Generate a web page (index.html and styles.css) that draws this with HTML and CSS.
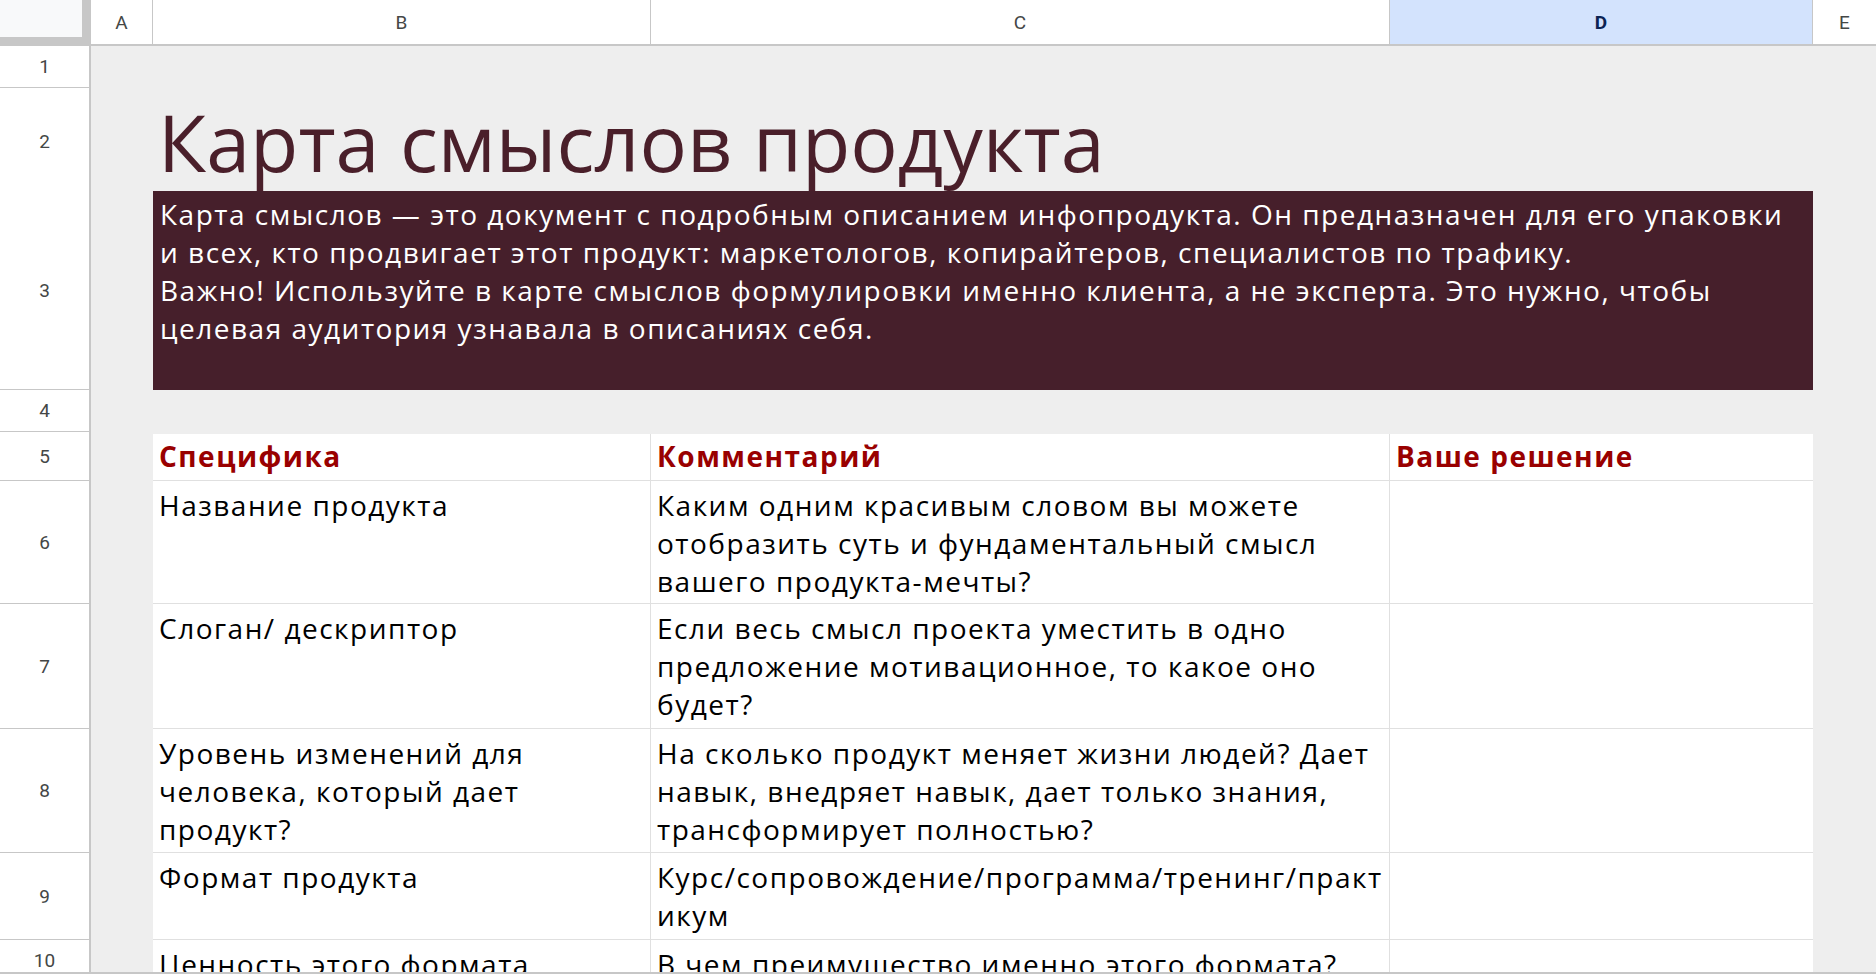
FILE: index.html
```html
<!DOCTYPE html>
<html lang="ru">
<head>
  <meta charset="UTF-8" />
  <title>Карта смыслов продукта</title>
  <link rel="stylesheet" href="styles.css">
</head>
<body>

  <div class="sheet">

    <!-- column letters -->
    <div class="row row-cols">
      <div class="corner"></div>
      <div class="col-head">A</div>
      <div class="col-head">B</div>
      <div class="col-head">C</div>
      <div class="col-head active">D</div>
      <div class="col-head">E</div>
    </div>

    <div class="row r-1">
      <div class="row-head">1</div>
    </div>

    <div class="row r-2">
      <div class="row-head">2</div>
      <div></div>
      <h1 class="title">Карта смыслов продукта</h1>
    </div>

    <div class="row r-3">
      <div class="row-head">3</div>
      <div></div>
      <div class="intro">
        Карта смыслов — это документ с подробным описанием инфопродукта. Он предназначен для его упаковки<br>
        и всех, кто продвигает этот продукт: маркетологов, копирайтеров, специалистов по трафику.<br>
        Важно! Используйте в карте смыслов формулировки именно клиента, а не эксперта. Это нужно, чтобы<br>
        целевая аудитория узнавала в описаниях себя.
      </div>
    </div>

    <div class="row r-4">
      <div class="row-head">4</div>
    </div>

    <!-- table -->
    <div class="row r-5">
      <div class="row-head">5</div>
      <div></div>
      <div class="cell th">Специфика</div>
      <div class="cell th">Комментарий</div>
      <div class="cell th last">Ваше решение</div>
    </div>

    <div class="row r-6">
      <div class="row-head">6</div>
      <div></div>
      <div class="cell">Название продукта</div>
      <div class="cell">Каким одним красивым словом вы можете<br>отобразить суть и фундаментальный смысл<br>вашего продукта-мечты?</div>
      <div class="cell last"></div>
    </div>

    <div class="row r-7">
      <div class="row-head">7</div>
      <div></div>
      <div class="cell">Слоган/ дескриптор</div>
      <div class="cell">Если весь смысл проекта уместить в одно<br>предложение мотивационное, то какое оно<br>будет?</div>
      <div class="cell last"></div>
    </div>

    <div class="row r-8">
      <div class="row-head">8</div>
      <div></div>
      <div class="cell">Уровень изменений для<br>человека, который дает<br>продукт?</div>
      <div class="cell">На сколько продукт меняет жизни людей? Дает<br>навык, внедряет навык, дает только знания,<br>трансформирует полностью?</div>
      <div class="cell last"></div>
    </div>

    <div class="row r-9">
      <div class="row-head">9</div>
      <div></div>
      <div class="cell">Формат продукта</div>
      <div class="cell">Курс/сопровождение/программа/тренинг/практ<br>икум</div>
      <div class="cell last"></div>
    </div>

    <div class="row r-10">
      <div class="row-head">10</div>
      <div></div>
      <div class="cell">Ценность этого формата</div>
      <div class="cell">В чем преимущество именно этого формата?</div>
      <div class="cell last"></div>
    </div>

  </div>

</body>
</html>
```
FILE: styles.css
```css
body {
  margin: 0;
  background: #eeeeee;
  font-family: "Open Sans", "Noto Sans", sans-serif;
  overflow: hidden;
}

.sheet {
  height: 974px;
  overflow: hidden;
  box-sizing: border-box;
  border-bottom: 2px solid #c7c7c7;
}

.row {
  display: grid;
  grid-template-columns: 91px 62px 498px 739px 423px 63px;
}

.row-cols { height: 46px; }
.r-1 { height: 42px; }
.r-2 { height: 103px; }
.r-3 { height: 199px; }
.r-4 { height: 42px; }
.r-5 { height: 49px; }
.r-6 { height: 123px; }
.r-7 { height: 125px; }
.r-8 { height: 124px; }
.r-9 { height: 87px; }
.r-10 { height: 42px; }

/* headers */
.corner {
  background: #f8f9fa;
  border-right: 9px solid #c7c7c7;
  border-bottom: 9px solid #c7c7c7;
}

.col-head {
  display: flex;
  align-items: center;
  justify-content: center;
  background: white;
  border-right: 1px solid #c7c7c7;
  border-bottom: 2px solid #c7c7c7;
  font-family: Roboto, "Liberation Sans", sans-serif;
  font-size: 19px;
  color: #444746;
}

.col-head:last-child {
  border-right: none;
}

.col-head.active {
  background: #d3e3fd;
  color: #0b2453;
  font-weight: bold;
}

.row-head {
  display: flex;
  align-items: center;
  justify-content: center;
  background: white;
  border-right: 2px solid #c7c7c7;
  border-bottom: 1px solid #c7c7c7;
  font-family: Roboto, "Liberation Sans", sans-serif;
  font-size: 19px;
  color: #444746;
}

/* title + intro */
.title {
  grid-column: 3 / 7;
  align-self: end;
  margin: 0;
  padding-left: 5px;
  font-size: 79px;
  font-weight: normal;
  color: #4a1f2a;
  white-space: nowrap;
}

.intro {
  grid-column: 3 / 6;
  background: #461f2b;
  color: white;
  padding: 4px 7px 0;
  font-size: 28px;
  line-height: 38px;
  letter-spacing: 1.5px;
  white-space: nowrap;
  overflow: hidden;
}

/* table */
.cell {
  background: white;
  border-right: 1px solid #e0e0e0;
  border-bottom: 1px solid #e0e0e0;
  padding: 5px 6px 0;
  font-size: 28px;
  line-height: 38px;
  letter-spacing: 1.5px;
  color: #000;
  white-space: nowrap;
  overflow: hidden;
}

.cell.last {
  border-right: none;
}

.cell.th {
  margin-top: 2px;
  padding-top: 3px;
  font-weight: bold;
  color: #990000;
}
```
